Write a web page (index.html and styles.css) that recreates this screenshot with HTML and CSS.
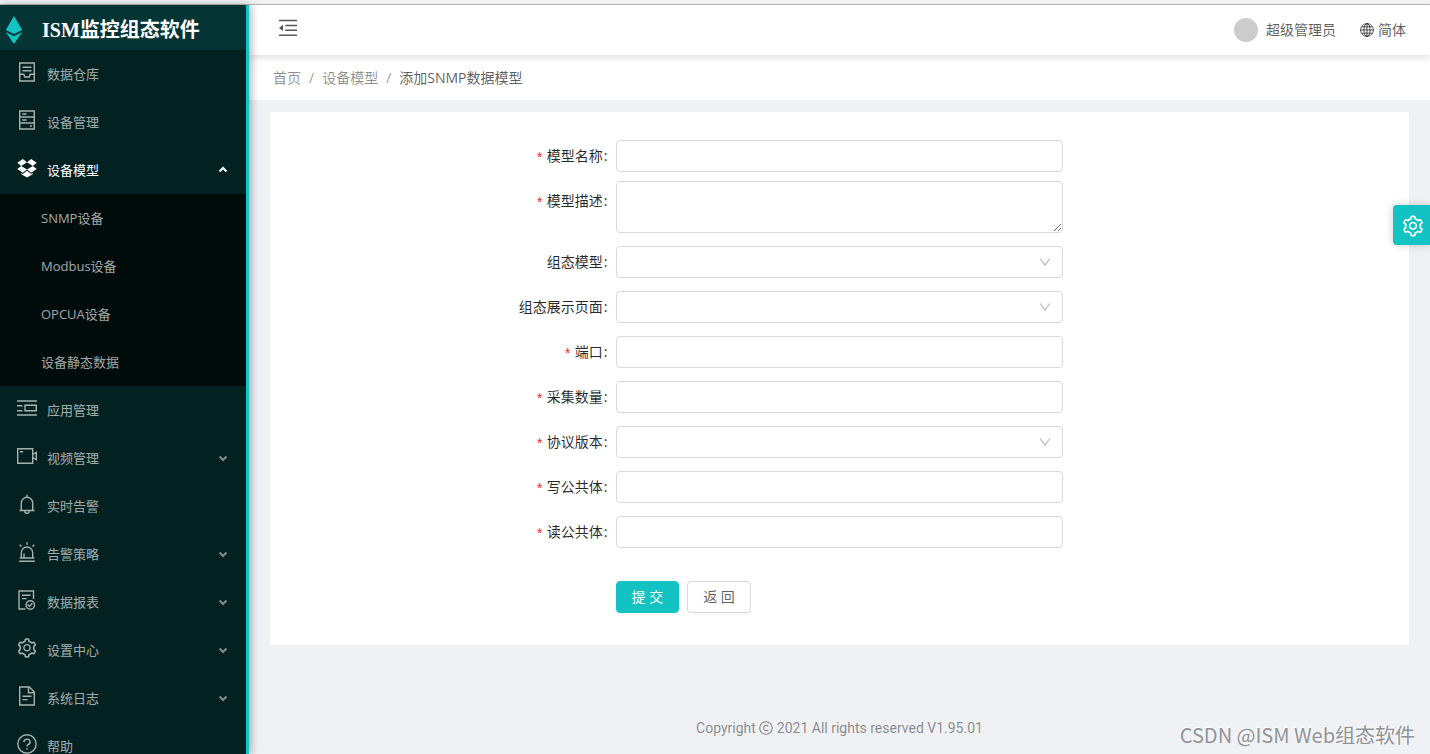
FILE: index.html
```html
<!DOCTYPE html>
<html lang="zh-CN">
<head>
<meta charset="utf-8">
<title>ISM监控组态软件</title>
<link rel="stylesheet" href="styles.css">
</head>
<body>
<svg class="defs" aria-hidden="true">
  <symbol id="gear" viewBox="0 0 1024 1024"><path fill="currentColor" d="M924.8 625.7l-65.5-56c3.1-19 4.7-38.4 4.7-57.8s-1.6-38.8-4.7-57.8l65.5-56a32.03 32.03 0 0 0 9.3-35.2l-.9-2.6a443.74 443.74 0 0 0-79.7-137.9l-1.8-2.1a32.12 32.12 0 0 0-35.1-9.5l-81.3 28.9c-30-24.6-63.5-44-99.7-57.6l-15.7-85a32.05 32.05 0 0 0-25.8-25.7l-2.7-.5c-52.1-9.4-106.9-9.4-159 0l-2.7.5a32.05 32.05 0 0 0-25.8 25.7l-15.8 85.4a351.86 351.86 0 0 0-99 57.4l-81.9-29.1a32 32 0 0 0-35.1 9.5l-1.8 2.1a446.02 446.02 0 0 0-79.7 137.9l-.9 2.6c-4.5 12.5-.8 26.5 9.3 35.2l66.3 56.6c-3.1 18.8-4.6 38-4.6 57.1 0 19.2 1.5 38.4 4.6 57.1L99 625.5a32.03 32.03 0 0 0-9.3 35.2l.9 2.6c18.1 50.4 44.9 96.9 79.7 137.9l1.8 2.1a32.12 32.12 0 0 0 35.1 9.5l81.9-29.1c29.8 24.5 63.1 43.9 99 57.4l15.8 85.4a32.05 32.05 0 0 0 25.8 25.7l2.7.5a449.4 449.4 0 0 0 159 0l2.7-.5a32.05 32.05 0 0 0 25.8-25.7l15.7-85a350 350 0 0 0 99.7-57.6l81.3 28.9a32 32 0 0 0 35.1-9.5l1.8-2.1c34.8-41.1 61.6-87.5 79.7-137.9l.9-2.6c4.5-12.3.8-26.3-9.3-35zM788.3 465.9c2.5 15.1 3.8 30.6 3.8 46.1s-1.3 31-3.8 46.1l-6.6 40.1 74.7 63.9a370.03 370.03 0 0 1-42.6 73.6L721 702.8l-31.4 25.8c-23.9 19.6-50.5 35-79.3 45.8l-38.1 14.3-17.9 97a377.5 377.5 0 0 1-85 0l-17.9-97.2-37.8-14.5c-28.5-10.8-55-26.2-78.7-45.7l-31.4-25.9-93.4 33.2c-17-22.9-31.2-47.6-42.6-73.6l75.5-64.5-6.5-40c-2.4-14.9-3.7-30.3-3.7-45.5 0-15.3 1.2-30.6 3.7-45.5l6.5-40-75.5-64.5c11.3-26.1 25.6-50.7 42.6-73.6l93.4 33.2 31.4-25.9c23.7-19.5 50.2-34.9 78.7-45.7l37.9-14.3 17.9-97.2c28.1-3.2 56.8-3.2 85 0l17.9 97 38.1 14.3c28.7 10.8 55.4 26.2 79.3 45.8l31.4 25.8 92.8-32.9c17 22.9 31.2 47.6 42.6 73.6L781.8 426l6.5 39.9zM512 326c-97.2 0-176 78.8-176 176s78.8 176 176 176 176-78.8 176-176-78.8-176-176-176zm79.2 255.2A111.6 111.6 0 0 1 512 614c-29.9 0-58-11.7-79.2-32.8A111.6 111.6 0 0 1 400 502c0-29.9 11.7-58 32.8-79.2C454 401.6 482.1 390 512 390c29.9 0 58 11.6 79.2 32.8A111.6 111.6 0 0 1 624 502c0 29.9-11.7 58-32.8 79.2z"/></symbol>
  <symbol id="chevron" viewBox="0 0 10 10"><path d="M1.5 3.5 5 7l3.5-3.5" fill="none" stroke="currentColor" stroke-width="2"/></symbol>
  <symbol id="arrow" viewBox="0 0 12 12"><path d="M1.2 2.5 6 9l4.8-6.5" fill="none" stroke="currentColor" stroke-width="1.1"/></symbol>
</svg>
<div class="topline"></div>
<div class="layout">
  <aside class="sidebar">
    <div class="brand">
      <svg class="brand-logo" viewBox="0 0 18 28" aria-hidden="true"><path fill="currentColor" d="M9 0 17.2 14 9 18 .8 14ZM.8 16 9 20.2 17.2 16 9 28Z"/></svg>
      <h1 class="brand-name">ISM监控组态软件</h1>
    </div>
    <nav>
      <ul class="menu">
        <li><a class="item" href="#"><svg class="icon" viewBox="0 0 20 20"><path d="M2.7 1h14.6v18H2.7zM5.5 5.2h9M5.5 8.7h9M2.7 12.2h4.1l1 2.8h4.4l1-2.8h4.1"/></svg><span>数据仓库</span></a></li>
        <li><a class="item" href="#"><svg class="icon" viewBox="0 0 20 20"><path d="M2.7 1h14.6v18H2.7zM2.7 7h14.6M2.7 13h14.6M5.2 4h4.3M5.2 10h4.3M13 16h2"/></svg><span>设备管理</span></a></li>
        <li><a class="item item-open" href="#"><svg class="icon icon-solid" viewBox="0 0 20 20"><path d="M5.8 1 10 4.3 4.2 7.9.3 4.7ZM14.2 1 10 4.3l5.8 3.6 3.9-3.2ZM.3 11l3.9-3.1L10 11.4l-4.2 3.3ZM19.7 11l-3.9-3.1-5.8 3.5 4.2 3.3ZM4.3 15.1l1.5 1L10 12.8l4.2 3.3 1.5-1v1.2L10 19.5l-5.7-3.2Z"/></svg><span>设备模型</span><svg class="chevron chevron-up"><use href="#chevron"/></svg></a>
          <ul class="submenu">
            <li><a class="subitem" href="#">SNMP设备</a></li>
            <li><a class="subitem" href="#">Modbus设备</a></li>
            <li><a class="subitem" href="#">OPCUA设备</a></li>
            <li><a class="subitem" href="#">设备静态数据</a></li>
          </ul>
        </li>
        <li><a class="item" href="#"><svg class="icon" viewBox="0 0 20 20"><path d="M0 3h20M0 17h20M0 7.8h5.5M0 12.7h5.5M8 7.2h11.3v5.6H8z"/></svg><span>应用管理</span></a></li>
        <li><a class="item" href="#"><svg class="icon" viewBox="0 0 20 20"><path d="M.7 2.7h15v14.6H.7zM3 5.7h3M15.7 8.5l3.6-2v7l-3.6-2"/></svg><span>视频管理</span><svg class="chevron"><use href="#chevron"/></svg></a></li>
        <li><a class="item" href="#"><svg class="icon" viewBox="0 0 20 20"><path d="M4.3 16.3V9a5.7 5.7 0 0 1 11.4 0v7.3M2.5 16.5h15M10 3.3V.8M7.8 17.3a2.2 2 0 0 0 4.4 0"/></svg><span>实时告警</span></a></li>
        <li><a class="item" href="#"><svg class="icon" viewBox="0 0 20 20"><path d="M4.3 16v-5.3a5.7 5.7 0 0 1 11.4 0V16M2.7 16h14.6M2.2 19.2h15.6M10 2.8V.3M4.5 4.6 2.6 2.7M15.5 4.6l1.9-1.9M7 15.5v-4"/></svg><span>告警策略</span><svg class="chevron"><use href="#chevron"/></svg></a></li>
        <li><a class="item" href="#"><svg class="icon" viewBox="0 0 20 20"><path d="M8.5 19H2V1h14.5v8M5 5.3h8.5M5 8.6h4.5M10.6 14.6l1.9 1.8 2.8-3.2"/><circle cx="13.3" cy="15" r="4.2"/></svg><span>数据报表</span><svg class="chevron"><use href="#chevron"/></svg></a></li>
        <li><a class="item" href="#"><svg class="icon icon-solid" viewBox="1 1 18 18"><use href="#gear" width="20" height="20"/></svg><span>设置中心</span><svg class="chevron"><use href="#chevron"/></svg></a></li>
        <li><a class="item" href="#"><svg class="icon" viewBox="0 0 20 20"><path d="M2.7 1h9.6l5 5v13H2.7zM11.5 1v5.8h5.8M5.5 10.3h9M5.5 13.6h5"/></svg><span>系统日志</span><svg class="chevron"><use href="#chevron"/></svg></a></li>
        <li><a class="item" href="#"><svg class="icon" viewBox="0 0 20 20"><circle cx="10" cy="10" r="9.2"/><path d="M6.9 8a3.1 2.8 0 1 1 4.4 2.5Q10 11.1 10 12.6M10 14v1.6"/></svg><span>帮助</span></a></li>
      </ul>
    </nav>
  </aside>

  <div class="main">
    <header class="header">
      <button class="fold" type="button" aria-label="折叠菜单"><svg viewBox="0 0 20 20"><path d="M1 2.5h18M7.3 7.5H19M7.3 12.3H19M1 17.3h18" fill="none" stroke="currentColor" stroke-width="1.6"/><path d="M1 9.9 5 6.8V13Z" fill="currentColor"/></svg></button>
      <div class="tools">
        <a class="tool user" href="#"><span class="avatar"></span>超级管理员</a>
        <a class="tool" href="#"><svg class="globe" viewBox="0 0 14 14"><g fill="none" stroke="currentColor"><circle cx="7" cy="7" r="6.4"/><ellipse cx="7" cy="7" rx="3.1" ry="6.4"/><path d="M7 .6v12.8M.6 7h12.8M1.6 3.8h10.8M1.6 10.2h10.8"/></g></svg>简体</a>
      </div>
    </header>
    <nav class="crumbs" aria-label="面包屑">
      <a href="#">首页</a><span class="slash">/</span><a href="#">设备模型</a><span class="slash">/</span><span class="current">添加SNMP数据模型</span>
    </nav>
    <main class="content">
      <form class="card">
        <div class="row"><label class="label required" for="name">模型名称</label><input class="control" id="name" type="text"></div>
        <div class="row"><label class="label required" for="desc">模型描述</label><textarea class="control area" id="desc"></textarea></div>
        <div class="row"><label class="label" for="model">组态模型</label><div class="picker"><select class="control" id="model"><option></option></select><svg class="arrow"><use href="#arrow"/></svg></div></div>
        <div class="row"><label class="label" for="page">组态展示页面</label><div class="picker"><select class="control" id="page"><option></option></select><svg class="arrow"><use href="#arrow"/></svg></div></div>
        <div class="row"><label class="label required" for="port">端口</label><input class="control" id="port" type="text"></div>
        <div class="row"><label class="label required" for="count">采集数量</label><input class="control" id="count" type="text"></div>
        <div class="row"><label class="label required" for="version">协议版本</label><div class="picker"><select class="control" id="version"><option></option></select><svg class="arrow"><use href="#arrow"/></svg></div></div>
        <div class="row"><label class="label required" for="write">写公共体</label><input class="control" id="write" type="text"></div>
        <div class="row"><label class="label required" for="read">读公共体</label><input class="control" id="read" type="text"></div>
        <div class="row row-actions"><div class="actions"><button class="btn btn-primary" type="submit">提 交</button><button class="btn" type="button">返 回</button></div></div>
      </form>
    </main>
    <footer class="footer">Copyright <svg class="copy" viewBox="0 0 14 14" role="img" aria-label="©"><g fill="none" stroke="currentColor" stroke-width="1.1"><circle cx="7" cy="7" r="6.3"/><path d="M9.3 5.6a2.5 2.7 0 1 0 0 2.8"/></g></svg> 2021 All rights reserved V1.95.01</footer>
  </div>
</div>
<button class="setting" type="button" aria-label="主题设置"><svg viewBox="0 0 20 20"><use href="#gear"/></svg></button>
<div class="watermark">CSDN @ISM Web组态软件</div>
</body>
</html>
```
FILE: styles.css
```css
* { box-sizing: border-box; }

body {
  margin: 0;
  height: 100vh;
  display: flex;
  flex-direction: column;
  overflow: hidden;
  position: relative;
  background: #eff1f5;
  color: rgba(0, 0, 0, 0.65);
  font: 14px/22px "Open Sans", "Noto Sans CJK SC", sans-serif;
}

a { color: inherit; text-decoration: none; }
ul { list-style: none; margin: 0; padding: 0; }
button, input, select, textarea { font: inherit; color: inherit; }

.defs { position: absolute; width: 0; height: 0; }

.topline {
  flex: none;
  height: 5px;
  background: #f5f5f5;
  border-bottom: 1px solid #bbb;
}

.layout { flex: 1; min-height: 0; display: flex; }

/* Sidebar */
.sidebar {
  flex: none;
  width: 249px;
  overflow: hidden;
  position: relative;
  z-index: 2;
  background: #032121;
  border-right: 3px solid #13c2c2;
  box-shadow: 2px 0 8px rgba(0, 21, 41, 0.35);
}

.brand {
  height: 45px;
  padding: 4px 5px 0;
  display: flex;
  align-items: center;
  gap: 19px;
  background: #053434;
}

.brand-logo { width: 18px; height: 28px; color: #13c2c2; }

.brand-name {
  margin: 0;
  color: #fff;
  font: bold 20px/32px "Liberation Serif", "Noto Sans CJK SC", serif;
}

.item, .subitem {
  height: 48px;
  display: flex;
  align-items: center;
  color: rgba(255, 255, 255, 0.65);
  font-size: 13px;
}

.item { padding: 0 18px 0 17px; gap: 10px; }
.item-open { color: #fff; }
.subitem { padding-left: 41px; }
.submenu { background: #000c0c; }

.icon {
  flex: none;
  width: 20px;
  height: 20px;
  margin-bottom: 4px;
  fill: none;
  stroke: currentColor;
  stroke-width: 1.4;
}

.icon-solid { fill: currentColor; stroke: none; }
.chevron { width: 10px; height: 10px; margin-left: auto; opacity: 0.75; }
.chevron-up { transform: rotate(180deg); opacity: 1; }

/* Header */
.main { flex: 1; min-width: 0; display: flex; flex-direction: column; }

.header {
  flex: none;
  height: 50px;
  padding: 0 24px 0 29px;
  display: flex;
  align-items: center;
  justify-content: space-between;
  position: relative;
  z-index: 1;
  background: #fff;
  box-shadow: 0 2px 8px rgba(0, 0, 0, 0.15);
}

.fold { padding: 0; border: 0; background: none; display: flex; margin-bottom: 4px; }
.fold svg { width: 20px; height: 20px; }
.tools { display: flex; gap: 24px; }
.tool { display: flex; align-items: center; gap: 4px; }
.user { gap: 8px; }
.avatar { width: 24px; height: 24px; border-radius: 50%; background: #ccc; }
.globe { width: 14px; height: 14px; }

.crumbs {
  flex: none;
  height: 45px;
  padding: 0 24px;
  display: flex;
  align-items: center;
  background: #fff;
  color: rgba(0, 0, 0, 0.45);
}

.slash { margin: 0 8px; }
.current { color: rgba(0, 0, 0, 0.65); }

/* Form */
.content { padding: 12px 21px 0; }
.card { padding: 28px 32px 32px; background: #fff; border-radius: 2px; }

.row {
  display: grid;
  grid-template-columns: 7fr 10fr 7fr;
  align-items: start;
  margin-bottom: 13px;
}

.label {
  padding-right: 8px;
  line-height: 32px;
  text-align: right;
  color: rgba(0, 0, 0, 0.85);
}

.label::after { content: ":"; margin-left: 1px; }

.required::before {
  content: "*";
  margin-right: 3px;
  color: #f5222d;
  font-family: "Liberation Mono", monospace;
  line-height: 1;
  vertical-align: -2px;
}

.control {
  display: block;
  width: 100%;
  height: 32px;
  margin: 0;
  padding: 4px 11px;
  border: 1px solid #d9d9d9;
  border-radius: 4px;
  background: #fff;
  appearance: none;
}

.area { height: 52px; margin-top: -4px; resize: vertical; }
.picker { position: relative; }

.arrow {
  position: absolute;
  top: 10px;
  right: 12px;
  width: 12px;
  height: 12px;
  color: #b5b5b5;
  pointer-events: none;
}

.row-actions { margin: 33px 0 0; }
.actions { grid-column: 2; display: flex; gap: 8px; }

.btn {
  height: 32px;
  padding: 0 15px;
  border: 1px solid #d9d9d9;
  border-radius: 4px;
  background: #fff;
  line-height: 28px;
  box-shadow: 0 2px 0 rgba(0, 0, 0, 0.02);
}

.btn-primary { background: #13c2c2; border-color: #13c2c2; color: #fff; }

.footer {
  margin-top: 72px;
  text-align: center;
  color: rgba(0, 0, 0, 0.45);
  font-family: Roboto, "Noto Sans CJK SC", sans-serif;
}

.copy { width: 14px; height: 14px; vertical-align: -2px; }

/* Floating layers */
.setting {
  position: absolute;
  z-index: 3;
  top: 205px;
  right: 0;
  width: 37px;
  height: 40px;
  padding: 2px 0 0 8px;
  display: flex;
  align-items: center;
  border: 0;
  border-radius: 4px 0 0 4px;
  background: #13c2c2;
  color: #fff;
  box-shadow: 0 0 8px rgba(0, 0, 0, 0.2);
}

.setting svg { width: 24px; height: 24px; }

.watermark {
  position: absolute;
  right: 15px;
  bottom: 4px;
  color: #909296;
  font: 20px/30px "Noto Sans CJK SC", sans-serif;
  text-shadow: -1px -1px 0 #fff;
}
```
